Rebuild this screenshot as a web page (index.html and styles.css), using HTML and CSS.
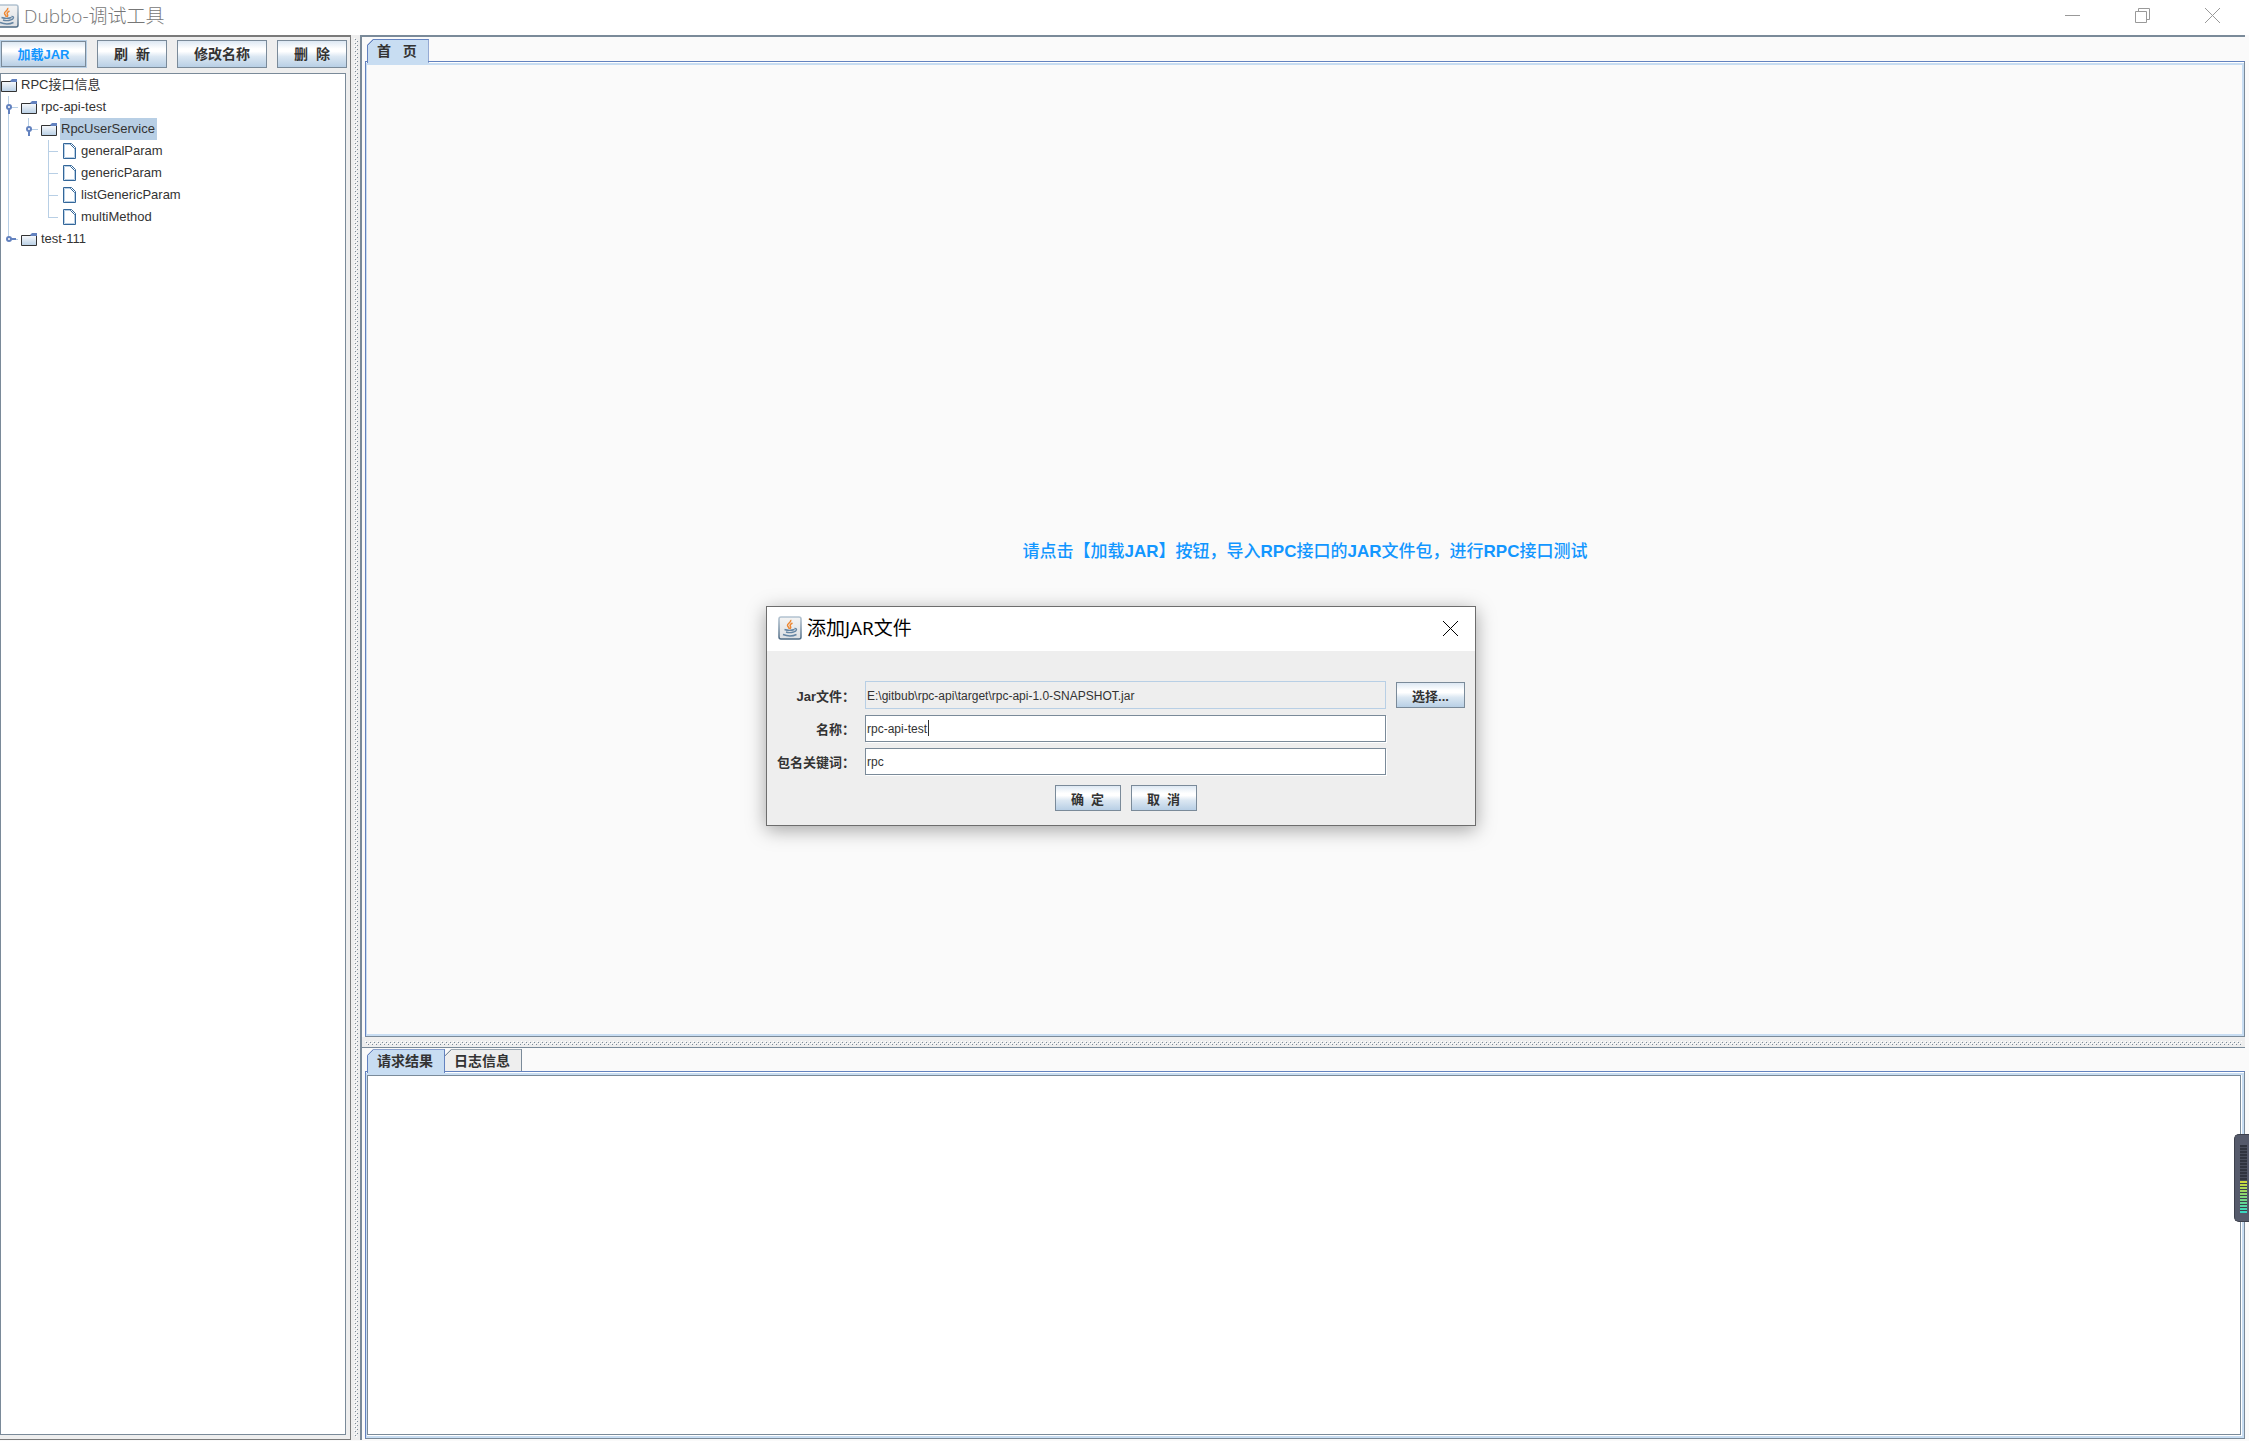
FILE: index.html
```html
<!DOCTYPE html>
<html lang="zh-CN">
<head>
    <meta charset="UTF-8">
    <title>Dubbo-调试工具</title>
    <link rel="stylesheet" href="styles.css">
</head>
<body>
    <svg class="defs" width="0" height="0">
        <defs>
            <linearGradient id="frameFill" x1="0" y1="0" x2="0" y2="1">
                <stop offset="0" stop-color="#f4f4f4"/>
                <stop offset="1" stop-color="#dcdfe3"/>
            </linearGradient>
            <linearGradient id="frameLine" x1="0" y1="0" x2="0" y2="1">
                <stop offset="0" stop-color="#b3c3d1"/>
                <stop offset="1" stop-color="#4d6a84"/>
            </linearGradient>
            <linearGradient id="folderFill" x1="0" y1="0" x2="0" y2="1">
                <stop offset="0" stop-color="#ffffff"/>
                <stop offset="1" stop-color="#b8cfe5"/>
            </linearGradient>
        </defs>
        <symbol id="java" viewBox="0 0 24 24">
            <rect x="1" y="1" width="22" height="22" rx="2" fill="url(#frameFill)" stroke="url(#frameLine)" stroke-width="1.5"/>
            <path d="M12.500 4c1.500 2-3.500 3.500-3 5.500 .2 1.500 2 2 1.500 3.500M14.500 7c-2 1-3 2-2 3.500 .6 1 .4 1.500-.5 2.500" fill="none" stroke="#ee8732" stroke-width="1.500"/>
            <path d="M6.500 13.500c3 1 7 1 10 0M8 16c2.500 .8 5 .8 7.500 0M16.500 12.500c3-.5 2.500 3-1 3.500M5 18.500c4 1.600 10 1.600 13.500 0" fill="none" stroke="#6585a3" stroke-width="1.400"/>
        </symbol>
        <symbol id="folder" viewBox="0 0 16 13">
            <path d="M.5 12.500V2.500h9.500l1-1h4.500v11z" fill="url(#folderFill)" stroke="#333333"/>
            <path d="M9 2l2-2h5v3h-6z" fill="#6382bf"/>
        </symbol>
        <symbol id="leaf" viewBox="0 0 13 16">
            <path d="M.5 .5h8l4 4v11H.5z" fill="#ffffff" stroke="#336699"/>
            <path d="M1.500 14.500V1.500h6M2 14.500h9.500V6" fill="none" stroke="#b8cfe5"/>
            <path d="M7.500 .5v1l4 4h1" fill="none" stroke="#336699"/>
        </symbol>
        <symbol id="close" viewBox="0 0 15 15">
            <path d="M0 0l15 15M15 0L0 15" fill="none" stroke="currentColor"/>
        </symbol>
    </svg>

    <div class="window">
        <div class="titlebar">
            <svg class="java-icon" width="24" height="24"><use href="#java"/></svg>
            <h1>Dubbo-调试工具</h1>
            <div class="window-buttons">
                <button aria-label="最小化"><svg width="15" height="15"><path d="M0 7.500h15" stroke="currentColor"/></svg></button>
                <button aria-label="还原"><svg width="15" height="15"><path d="M.5 3.500h11v11H.5zM3.500 3.500v-3h11v11h-3" fill="none" stroke="currentColor"/></svg></button>
                <button aria-label="关闭"><svg width="15" height="15"><use href="#close"/></svg></button>
            </div>
        </div>

        <div class="main">
            <div class="left">
                <div class="toolbar">
                    <button class="btn btn-load">加载JAR</button>
                    <button class="btn btn-short">刷  新</button>
                    <button class="btn btn-long">修改名称</button>
                    <button class="btn btn-short">删  除</button>
                </div>
                <div class="tree">
                    <div class="node"><svg width="16" height="13"><use href="#folder"/></svg><span>RPC接口信息</span></div>
                    <ul>
                        <li class="open">
                            <div class="node"><svg width="16" height="13"><use href="#folder"/></svg><span>rpc-api-test</span></div>
                            <ul>
                                <li class="open">
                                    <div class="node selected"><svg width="16" height="13"><use href="#folder"/></svg><span>RpcUserService</span></div>
                                    <ul class="leaves">
                                        <li><div class="node"><svg width="13" height="16"><use href="#leaf"/></svg><span>generalParam</span></div></li>
                                        <li><div class="node"><svg width="13" height="16"><use href="#leaf"/></svg><span>genericParam</span></div></li>
                                        <li><div class="node"><svg width="13" height="16"><use href="#leaf"/></svg><span>listGenericParam</span></div></li>
                                        <li><div class="node"><svg width="13" height="16"><use href="#leaf"/></svg><span>multiMethod</span></div></li>
                                    </ul>
                                </li>
                            </ul>
                        </li>
                        <li class="closed">
                            <div class="node"><svg width="16" height="13"><use href="#folder"/></svg><span>test-111</span></div>
                        </li>
                    </ul>
                </div>
            </div>

            <div class="divider divider-v"></div>

            <div class="right">
                <div class="pane pane-top">
                    <div class="tabs">
                        <button class="tab active">首   页</button>
                    </div>
                    <div class="pane-body home">
                        <p>请点击【加载<b>JAR</b>】按钮，导入<b>RPC</b>接口的<b>JAR</b>文件包，进行<b>RPC</b>接口测试</p>
                    </div>
                </div>
                <div class="divider divider-h"></div>
                <div class="pane pane-bottom">
                    <div class="tabs">
                        <button class="tab active">请求结果</button>
                        <button class="tab">日志信息</button>
                    </div>
                    <div class="pane-body">
                        <textarea class="result" aria-label="请求结果"></textarea>
                    </div>
                </div>
            </div>
        </div>
    </div>

    <div class="dialog" role="dialog" aria-labelledby="dialogTitle">
        <div class="dialog-title">
            <svg width="24" height="24"><use href="#java"/></svg>
            <h2 id="dialogTitle">添加JAR文件</h2>
            <button aria-label="关闭"><svg width="15" height="15"><use href="#close"/></svg></button>
        </div>
        <form class="dialog-body">
            <div class="row">
                <label for="jarFile">Jar文件：</label>
                <input type="text" id="jarFile" value="E:\gitbub\rpc-api\target\rpc-api-1.0-SNAPSHOT.jar" readonly>
                <button type="button" class="btn btn-choose">选择...</button>
            </div>
            <div class="row">
                <label for="jarName">名称：</label>
                <input type="text" id="jarName" value="rpc-api-test">
                <i class="caret"></i>
            </div>
            <div class="row">
                <label for="keyword">包名关键词：</label>
                <input type="text" id="keyword" value="rpc">
            </div>
            <div class="actions">
                <button type="button" class="btn">确  定</button>
                <button type="button" class="btn">取  消</button>
            </div>
        </form>
    </div>

    <div class="meter">
        <div class="meter-off"></div>
        <div class="meter-on"></div>
    </div>
</body>
</html>
```
FILE: styles.css
```css
*, *::before, *::after {
    box-sizing: border-box;
}
body {
    margin: 0;
    height: 100vh;
    overflow: hidden;
    background: #fafafa;
    color: #333;
    font-family: "Liberation Sans", "Noto Sans CJK SC", sans-serif;
    font-size: 13px;
}
h1, h2, p, ul {
    margin: 0;
    padding: 0;
    font-weight: normal;
}
ul {
    list-style: none;
}
button {
    margin: 0;
    padding: 0;
    color: #333;
    font: bold 13px "Liberation Sans", "Noto Sans CJK SC", sans-serif;
    white-space: pre;
}
svg {
    display: block;
    flex: none;
}
.defs {
    position: absolute;
}
.window {
    display: flex;
    flex-direction: column;
    height: 100vh;
}

/* 标题栏 */
.titlebar {
    display: flex;
    align-items: center;
    height: 35px;
    padding-bottom: 4px;
    background: #fff;
    color: #999;
}
.java-icon {
    margin-left: -5px;
}
.titlebar h1, .dialog-title h2 {
    font-family: "Open Sans", "Noto Sans CJK SC", sans-serif;
    font-size: 19px;
    line-height: 24px;
}
.titlebar h1 {
    margin-left: 5px;
    font-weight: 300;
    color: #777;
}
.window-buttons {
    display: flex;
    gap: 55px;
    margin-left: auto;
    padding-right: 29px;
}
.window-buttons button, .dialog-title button {
    background: none;
    border: none;
    color: inherit;
}

/* 主体 */
.main {
    display: flex;
    flex: 1;
    min-height: 0;
    padding: 0 4px 1px 0;
}
.left {
    display: flex;
    flex-direction: column;
    width: 351px;
    padding: 3px 4px 4px 0;
    background: #eee;
    border: 1px solid #7a7a7a;
    border-width: 2px 1px 1px 0;
}
.toolbar {
    display: flex;
    gap: 10px;
    padding-bottom: 5px;
}
.btn {
    flex: none;
    height: 28px;
    padding-bottom: 2px;
    background: linear-gradient(#dde8f3, #fff 30%, #fff 40%, #dbe7f2 60%, #b8cfe5);
    border: 1px solid #7a8a99;
}
.btn-load {
    width: 87px;
    color: #1296ff;
    border-width: 2px;
    outline: 1px solid #b8cfe5;
    outline-offset: -1px;
}
.btn-short, .btn-long {
    width: 70px;
    font-size: 14px;
}
.btn-long {
    width: 90px;
}
.tree {
    flex: 1;
    background: #fff;
    border: 1px solid #7a8a99;
}
.tree ul {
    margin-left: 20px;
}
.tree li {
    position: relative;
}
.node {
    display: flex;
    align-items: center;
    gap: 3px;
    height: 22px;
}
.node span {
    padding: 0 2px 0 1px;
    line-height: 22px;
}
.selected span {
    background: #b8cfe5;
}
.tree .leaves {
    margin-left: 22px;
}
.leaves .node {
    gap: 4px;
}
/* 连接线 */
.tree li::before {
    content: "";
    position: absolute;
    left: -13px;
    top: 0;
    bottom: 0;
    border-left: 1px solid #b8cfe5;
}
.tree li:last-child::before {
    bottom: auto;
    height: 12px;
}
.tree li .node::before {
    content: "";
    position: absolute;
    left: -12px;
    top: 11px;
    width: 9px;
    border-top: 1px solid #b8cfe5;
}
.tree .leaves > li::before {
    left: -15px;
}
.tree .leaves .node::before {
    left: -14px;
}
.open::after, .closed::after {
    content: "";
    position: absolute;
    left: -15px;
    top: 8px;
    width: 6px;
    height: 6px;
    background: #fff;
    border: 2px solid #6382bf;
    border-radius: 3px;
}
.open > .node::after, .closed > .node::after {
    content: "";
    position: absolute;
    background: #6382bf;
}
.open > .node::after {
    left: -13px;
    top: 13px;
    width: 2px;
    height: 5px;
}
.closed > .node::after {
    left: -10px;
    top: 10px;
    width: 5px;
    height: 2px;
}

/* 分隔条 */
.divider {
    --dot: conic-gradient(at 1px 1px, transparent 270deg, #7a8a99 0);
    --light: conic-gradient(at 1px 1px, transparent 270deg, #fff 0);
    background-color: #eee;
    background-image: var(--dot), var(--dot), var(--light), var(--light);
    background-position: 1px 1px, 3px 3px, 0 0, 2px 2px;
    background-size: 4px 4px;
    background-origin: content-box;
    background-clip: content-box;
    border: solid #eee;
}
.divider-v {
    width: 9px;
    border-width: 3px 2px 3px 3px;
}
.divider-h {
    height: 10px;
    border-width: 4px 3px 2px 3px;
}

/* 右侧 */
.right {
    display: flex;
    flex-direction: column;
    flex: 1;
    min-width: 0;
    border: solid #7a8a99;
    border-width: 2px 0 0 2px;
}
.pane {
    display: flex;
    flex-direction: column;
    padding-left: 3px;
}
.pane-top {
    flex: 1;
    padding-top: 2px;
}
.pane-bottom {
    flex: 0 0 28%;
    padding-top: 1px;
    padding-bottom: 1px;
    border-top: 1px solid #7a8a99;
}
.tabs {
    display: flex;
    padding-left: 2px;
}
.tab {
    height: 22px;
    padding: 0 11px 2px 9px;
    background: linear-gradient(135deg, #7a8a99 5px, #eee 5px) border-box;
    border: solid #7a8a99;
    border-width: 1px 1px 0 0;
    font-size: 14px;
    clip-path: polygon(0 6px, 6px 0, 100% 0, 100% 100%, 0 100%);
}
.tab.active {
    height: 24px;
    margin-bottom: -2px;
    padding-bottom: 4px;
    background: linear-gradient(135deg, #6382bf 5px, #c8ddf2 5px) border-box;
    border-color: #6382bf;
    border-left-width: 1px;
    z-index: 1;
}
.pane-body {
    display: flex;
    flex: 1;
    border: 1px solid #7a8a99;
    border-top-color: #6382bf;
    border-left-color: #6382bf;
    box-shadow: inset 0 1px 0 #fff, inset 0 3px 0 #c8ddf2, inset -2px -2px 0 #c8ddf2, inset 1px 0 0 #c8ddf2;
}
.home {
    align-items: center;
    justify-content: center;
}
.home p {
    color: #1296ff;
    font-size: 17px;
    font-weight: 500;
}
.result {
    flex: 1;
    margin: 3px 3px 3px 1px;
    background: #fff;
    border: 1px solid #7a8a99;
    box-shadow: 1px 1px 0 #fff;
    outline: none;
    resize: none;
}

/* 添加JAR文件 */
.dialog {
    position: absolute;
    left: 766px;
    top: 606px;
    width: 710px;
    background: #eee;
    border: 1px solid #6d6d6d;
    box-shadow: 0 4px 18px rgba(0, 0, 0, 0.35);
}
.dialog-title {
    display: flex;
    align-items: center;
    gap: 5px;
    height: 44px;
    padding: 0 17px 2px 11px;
    background: #fff;
    color: #000;
}
.dialog-title button {
    margin-left: auto;
}
.dialog-body {
    padding: 30px 10px 14px;
}
.row {
    display: flex;
    align-items: center;
    gap: 10px;
    height: 28px;
    margin-bottom: 5px;
    position: relative;
}
.row label {
    width: 78px;
    font-weight: bold;
    text-align: right;
    white-space: nowrap;
}
.row input {
    width: 521px;
    height: 27px;
    padding: 1px 1px 0;
    background: #fff;
    border: 1px solid #7a8a99;
    box-shadow: 1px 1px 0 #fff;
    color: #333;
    font: 12px "Liberation Sans", "Noto Sans CJK SC", sans-serif;
    outline: none;
}
.row input:read-only {
    height: 28px;
    background: #eee;
    border-color: #b8cfe5;
    box-shadow: none;
}
.caret {
    position: absolute;
    left: 151px;
    top: 6px;
    height: 16px;
    border-left: 1px solid #333;
}
.dialog .btn {
    width: 66px;
    height: 26px;
    padding-bottom: 0;
}
.dialog .btn-choose {
    width: 69px;
}
.actions {
    display: flex;
    justify-content: center;
    gap: 10px;
    padding: 5px 0 0 9px;
}

/* 音量条 */
.meter {
    position: absolute;
    right: 0;
    top: 1134px;
    width: 15px;
    height: 88px;
    padding: 10px 2px 9px 5px;
    background: #555a6b;
    border: 1px solid #3c404c;
    border-right: none;
    border-radius: 5px 0 0 5px;
}
.meter-off {
    height: 36px;
    background: repeating-linear-gradient(#30343f 0 2px, #484d5b 2px 3px);
}
.meter-on {
    height: 32px;
    background: repeating-linear-gradient(transparent 0 2px, #3c404c 2px 3px), linear-gradient(#d3d838, #7fd67a 50%, #35d6c4);
}
```
